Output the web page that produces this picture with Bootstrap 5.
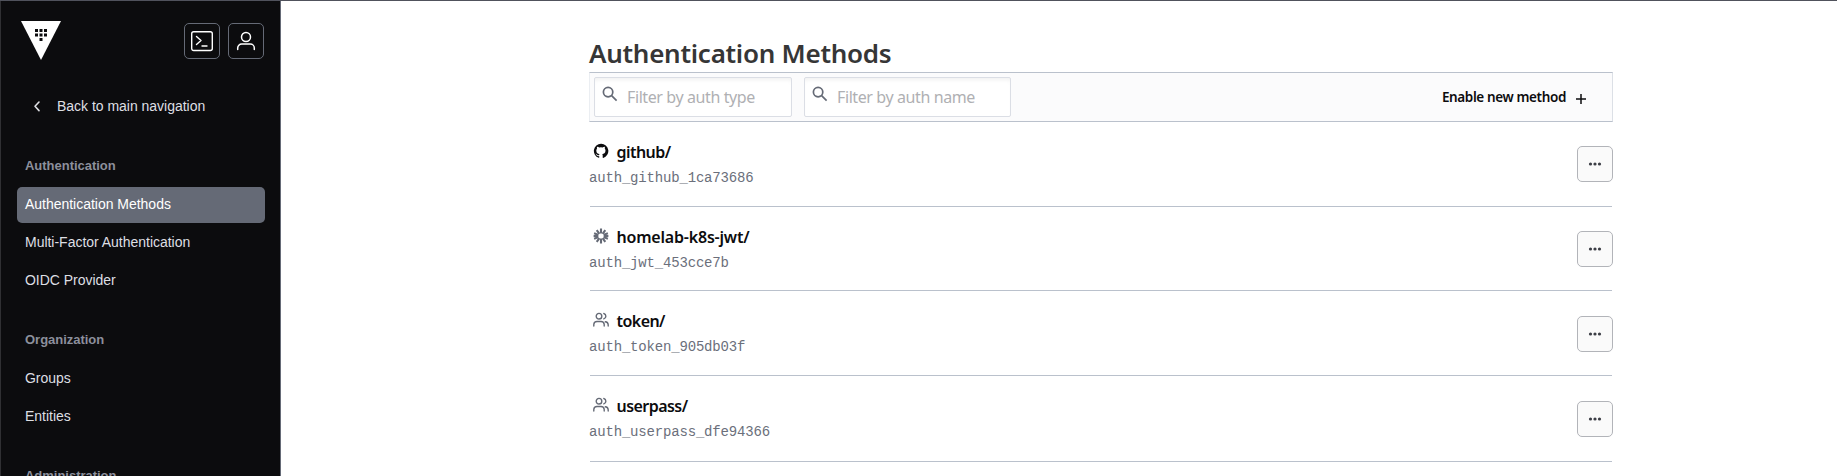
<!DOCTYPE html>
<html lang="en">
<head>
<meta charset="utf-8">
<meta name="viewport" content="width=device-width, initial-scale=1">
<title>Authentication Methods</title>
<link href="https://cdn.jsdelivr.net/npm/bootstrap@5.3.0/dist/css/bootstrap.min.css" rel="stylesheet">
<style>
body{height:476px;overflow:hidden;border-top:1px solid #50525c;font-family:"Noto Sans",sans-serif;background:#fff}
svg{display:block;flex:none}
.side{width:281px;height:475px;background:#0c0c0e;border-left:1px solid #303033;border-right:1px solid #656a76;font:14px/20px "Liberation Sans",Arial,sans-serif;letter-spacing:-.02px;color:#dedfe3;padding:17px 15px 0 16px;overflow:hidden}
.side-top{height:45px;padding:3px 1px 0 4px}
.tools{margin-top:2px}
.tool{width:36px;height:36px;border:1px solid #656a76;border-radius:5px;color:#fff}
.back{height:36px;margin-top:25px;padding-left:13px;gap:14px}
.side .nav-link{height:36px;padding:7px 8px 9px;margin-bottom:2px;color:#dedfe3;border-radius:5px;line-height:20px}
.side .nav-link.active{background:#656a76;color:#fff}
.group-title{font-size:13px;font-weight:700;line-height:20px;color:#8c909c;padding-left:8px;margin:29px 0 11px}
.back+.nav .group-title:first-child{margin-top:32px}
.main-col{width:1024px;margin-left:308px;padding-top:34px}
h1{font-size:26px;font-weight:600;line-height:37px;margin:0;color:#363636;letter-spacing:-.26px}
.toolbar{height:50px;background:#fbfbfc;border:1px solid #bac1cc;border-left-color:#ebeef2;border-right-color:#dce0e6;padding:4px}
.search{width:198px;height:40px;border:1px solid #dbdee5;border-radius:2px;background:#fff;box-shadow:inset 0 4px 4px -2px #f1f1f1;padding-left:7px;color:#656a76}
.search-name{width:207px;margin-left:12px}
.search input{border:0;outline:0;background:transparent;font-size:16px;width:150px;padding:0;margin-left:9px;letter-spacing:-.4px}
.search input::placeholder{color:#afb0b3;opacity:1}
.search svg{margin-top:8px}
.enable{font-size:13.5px;font-weight:600;color:#0c0c0e;margin-right:19px;gap:7px;letter-spacing:-.37px}
.entry{height:84px;padding-top:18px}
.entry+.entry{padding-top:19px}
.entry+.entry,.entry-last{background:linear-gradient(#bac1cc,#bac1cc) 1px 0/1022px 1px no-repeat}
.entry-name{height:24px;font-size:16px;font-weight:600;line-height:24px;color:#0c0c0e;letter-spacing:-.55px}
.entry-name svg{margin:0 7.5px 3px 4px;color:#656a76}
.accessor{font:14px/20px "Liberation Mono",monospace;letter-spacing:-.18px;color:#6b6f7b;margin-top:4px}
.kebab{width:36px;height:36px;border:1px solid #b2b4b9;border-radius:5px;background:#fafafa;color:#3b3d45;margin-top:6px;padding:0}
.low .kebab{margin-top:7px}
</style>
</head>
<body>
<svg width="0" height="0" class="position-absolute" aria-hidden="true">
<symbol id="people" viewBox="0 0 16 16"><g fill="none" stroke="currentColor" stroke-width="1.4" stroke-linecap="round"><circle cx="6" cy="4.2" r="2.8"/><path d="M.8 14v-1.500A3.200 3.200 0 0 1 4 9.500h4a3.200 3.200 0 0 1 3.200 3V14M10.800 1.500a2.800 2.800 0 0 1 0 5.400M12.300 9.700a3.200 3.200 0 0 1 2.900 3V14"/></g></symbol>
<symbol id="dots" viewBox="0 0 16 16"><g fill="currentColor"><circle cx="3.5" cy="8" r="1.6"/><circle cx="8" cy="8" r="1.6"/><circle cx="12.5" cy="8" r="1.6"/></g></symbol>
<symbol id="search" viewBox="0 0 16 16"><g fill="none" stroke="currentColor" stroke-width="1.7"><circle cx="6.1" cy="6.1" r="4.7"/><path d="M9.6 9.6l5 5"/></g></symbol>
</svg>
<div class="d-flex">
<aside class="side flex-shrink-0">
  <div class="side-top d-flex">
    <svg width="40" height="40" viewBox="0 0 40 40"><path fill="#fff" d="M0 0h40L20 39z"/><path fill="#0c0c0e" d="M14 8h3v3h-3zM18.500 8h3v3h-3zM23 8h3v3h-3zM14 12.500h3v3h-3zM18.500 12.500h3v3h-3zM23 12.500h3v3h-3zM18.500 17h3v3h-3z"/></svg>
    <div class="tools d-flex gap-2 ms-auto">
      <div class="tool d-flex align-items-center justify-content-center"><svg width="24" height="24" viewBox="0 0 24 24" fill="none" stroke="currentColor" stroke-width="1.400" stroke-linecap="round" stroke-linejoin="round"><rect x="1.700" y="2.700" width="20.600" height="18.800" rx="2"/><path d="M6.500 7.500l4.500 4-4.500 4M12 17h5"/></svg></div>
      <div class="tool d-flex align-items-center justify-content-center"><svg width="24" height="24" viewBox="0 0 24 24" fill="none" stroke="currentColor" stroke-width="1.500" stroke-linecap="round"><circle cx="12" cy="8" r="4.500"/><path d="M3.700 20.500V19a4 4 0 0 1 4-4h8.600a4 4 0 0 1 4 4v1.500"/></svg></div>
    </div>
  </div>
  <div class="back d-flex align-items-center"><svg width="13" height="16" viewBox="0 0 13 16" fill="none" stroke="currentColor" stroke-width="1.600" stroke-linecap="round" stroke-linejoin="round"><path d="M9 4L5 8.300l4 4.300"/></svg><span>Back to main navigation</span></div>
  <nav class="nav flex-column">
    <h2 class="group-title">Authentication</h2>
    <a class="nav-link active">Authentication Methods</a>
    <a class="nav-link">Multi-Factor Authentication</a>
    <a class="nav-link">OIDC Provider</a>
    <h2 class="group-title">Organization</h2>
    <a class="nav-link">Groups</a>
    <a class="nav-link">Entities</a>
    <h2 class="group-title">Administration</h2>
  </nav>
</aside>
<main class="main-col">
  <h1>Authentication Methods</h1>
  <div class="toolbar d-flex">
    <div class="search d-flex"><svg width="16" height="16"><use href="#search"/></svg><input placeholder="Filter by auth type"></div>
    <div class="search search-name d-flex"><svg width="16" height="16"><use href="#search"/></svg><input placeholder="Filter by auth name"></div>
    <div class="enable d-flex align-items-center ms-auto"><span>Enable new method</span><svg class="mt-1" width="16" height="16" viewBox="0 0 16 16" stroke="currentColor" stroke-width="1.500"><path d="M8 3v10M3 8h10"/></svg></div>
  </div>
  <div class="entry d-flex justify-content-between">
    <div><div class="entry-name d-flex align-items-center"><svg width="16" height="16" viewBox="0 0 16 16"><path fill="#0c0c0e" d="M8 .8a7.200 7.200 0 0 0-2.300 14c.4.1.5-.2.500-.4v-1.300c-2 .4-2.500-.9-2.500-.9-.3-.8-.8-1-.8-1-.7-.5 0-.5 0-.5.7.1 1.100.8 1.100.8.7 1.100 1.700.8 2.100.6.1-.5.3-.8.500-.9-1.600-.2-3.300-.8-3.300-3.600 0-.8.3-1.400.7-1.900 0-.2-.3-.9.1-1.900 0 0 .6-.2 2 .7a7 7 0 0 1 3.600 0c1.400-.9 2-.7 2-.7.4 1 .1 1.700.1 1.900.5.5.7 1.100.7 1.900 0 2.800-1.700 3.400-3.300 3.600.3.2.5.700.5 1.300v2c0 .2.1.5.500.4A7.200 7.200 0 0 0 8 .8z"/></svg>github/</div><div class="accessor">auth_github_1ca73686</div></div>
    <button class="kebab d-flex align-items-center justify-content-center" aria-label="Options"><svg width="16" height="16"><use href="#dots"/></svg></button>
  </div>
  <div class="entry d-flex justify-content-between">
    <div><div class="entry-name d-flex align-items-center" style="letter-spacing:-.2px"><svg width="16" height="16" viewBox="0 0 16 16" stroke="currentColor" stroke-width="2.100"><path d="M8 .6v4.800M8 10.600v4.800M.6 8h4.800M10.600 8h4.800M3.700 2.050l2.700 3.750M9.600 10.200l2.700 3.750M12.300 2.050L9.600 5.800M6.400 10.200l-2.700 3.750M1.100 5.200l4.200 1.700M10.700 9.100l4.200 1.700M14.900 5.200l-4.200 1.700M5.300 9.100l-4.200 1.700"/></svg>homelab-k8s-jwt/</div><div class="accessor">auth_jwt_453cce7b</div></div>
    <button class="kebab d-flex align-items-center justify-content-center" aria-label="Options"><svg width="16" height="16"><use href="#dots"/></svg></button>
  </div>
  <div class="entry low d-flex justify-content-between" style="height:85px">
    <div><div class="entry-name d-flex align-items-center"><svg width="16" height="16"><use href="#people"/></svg>token/</div><div class="accessor">auth_token_905db03f</div></div>
    <button class="kebab d-flex align-items-center justify-content-center" aria-label="Options"><svg width="16" height="16"><use href="#dots"/></svg></button>
  </div>
  <div class="entry low d-flex justify-content-between" style="height:86px">
    <div><div class="entry-name d-flex align-items-center"><svg width="16" height="16"><use href="#people"/></svg>userpass/</div><div class="accessor">auth_userpass_dfe94366</div></div>
    <button class="kebab d-flex align-items-center justify-content-center" aria-label="Options"><svg width="16" height="16"><use href="#dots"/></svg></button>
  </div>
  <div class="entry-last" style="height:14px"></div>
</main>
</div>
<script src="https://cdn.jsdelivr.net/npm/bootstrap@5.3.0/dist/js/bootstrap.bundle.min.js"></script>
</body>
</html>
